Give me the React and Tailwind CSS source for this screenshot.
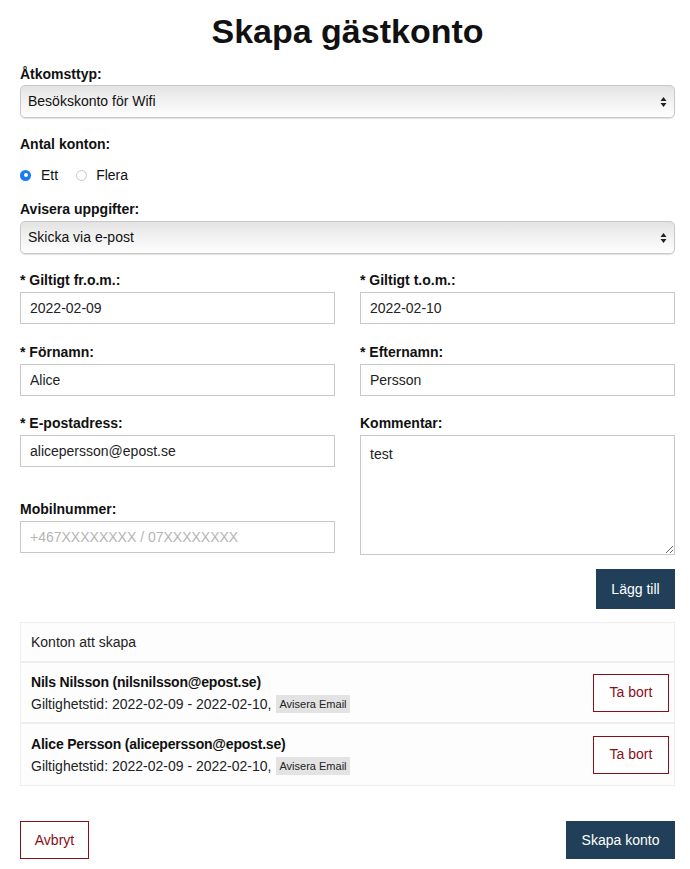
import React from "react";

const font = { fontFamily: '"Liberation Sans", Arial, Helvetica, sans-serif' };

function Arrows() {
  return (
    <svg width="7" height="12" viewBox="0 0 7 12" className="shrink-0">
      <path d="M3.5 1 L6.5 5 L0.5 5 Z" fill="#222" />
      <path d="M3.5 11 L6.5 7 L0.5 7 Z" fill="#222" />
    </svg>
  );
}

function FakeSelect({ value, className = "" }) {
  return (
    <div
      className={
        "h-[33px] rounded-[5px] border border-[#c9c9c9] bg-gradient-to-b from-[#e3e3e3] via-[#f2f2f2] to-[#fefefe] shadow-[0_1px_1px_rgba(0,0,0,0.12)] flex items-center justify-between pl-[7px] pr-[7px] text-[14px] text-[#111] " +
        className
      }
    >
      <span>{value}</span>
      <Arrows />
    </div>
  );
}

function Label({ children, className = "" }) {
  return (
    <div className={"h-[20px] leading-[20px] text-[14px] font-bold text-[#111] " + className}>
      {children}
    </div>
  );
}

function Input({ value, placeholder, className = "" }) {
  return (
    <input
      readOnly
      value={value}
      placeholder={placeholder}
      className={
        "block w-full h-[32px] border border-[#c8c8c8] bg-white px-[9px] text-[14px] text-[#222] placeholder:text-[#b5b5b5] outline-none " +
        className
      }
      style={font}
    />
  );
}

function Row({ name, last }) {
  return (
    <div
      className={
        "h-[61px] flex items-center justify-between pl-[10px] pr-[5px] bg-[#fdfdfd] " +
        (last ? "" : "border-b-2 border-[#eeeeee]")
      }
    >
      <div>
        <div className="text-[14px] font-bold text-[#111] leading-[20px] tracking-[-0.2px]">{name}</div>
        <div className="text-[14px] text-[#222] leading-[20px] mt-[2px] flex items-center">
          <span>Giltighetstid: 2022-02-09 - 2022-02-10,</span>
          <span className="ml-[5px] bg-[#e3e3e3] text-[11px] px-[3px] leading-[18px] text-[#222]">
            Avisera Email
          </span>
        </div>
      </div>
      <button className="w-[76px] h-[38px] border border-[#8b0d18] text-[#8b0d18] text-[14px] bg-white">
        Ta bort
      </button>
    </div>
  );
}

export default function App() {
  return (
    <div className="w-[690px] h-[869px] bg-white pl-[20px] pr-[15px] overflow-hidden" style={font}>
      <h1 className="pt-[11px] h-[52px] leading-[40px] text-center text-[34px] font-bold text-[#111]">
        Skapa gästkonto
      </h1>

      <Label className="mt-[12px]">Åtkomsttyp:</Label>
      <FakeSelect value="Besökskonto för Wifi" className="mt-[1px]" />

      <Label className="mt-[16px]">Antal konton:</Label>
      <div className="mt-[11px] h-[20px] flex items-center text-[14px] text-[#111]">
        <span className="w-[11px] h-[11px] rounded-full bg-[#1a7cf5] flex items-center justify-center">
          <span className="w-[4px] h-[4px] rounded-full bg-white" />
        </span>
        <span className="ml-[10px]">Ett</span>
        <span className="ml-[18px] w-[11px] h-[11px] rounded-full border border-[#c9c9c9] bg-white" />
        <span className="ml-[9px]">Flera</span>
      </div>

      <Label className="mt-[14px]">Avisera uppgifter:</Label>
      <FakeSelect value="Skicka via e-post" className="mt-[2px]" />

      <div className="grid grid-cols-2 gap-x-[25px] mt-[16px]">
        <div>
          <Label>* Giltigt fr.o.m.:</Label>
          <Input value="2022-02-09" className="mt-[2px]" />
        </div>
        <div>
          <Label>* Giltigt t.o.m.:</Label>
          <Input value="2022-02-10" className="mt-[2px]" />
        </div>
      </div>

      <div className="grid grid-cols-2 gap-x-[25px] mt-[18px]">
        <div>
          <Label>* Förnamn:</Label>
          <Input value="Alice" className="mt-[2px]" />
        </div>
        <div>
          <Label>* Efternamn:</Label>
          <Input value="Persson" className="mt-[2px]" />
        </div>
      </div>

      <div className="grid grid-cols-2 gap-x-[25px] mt-[17px]">
        <div>
          <Label>* E-postadress:</Label>
          <Input value="alicepersson@epost.se" className="mt-[2px]" />
          <Label className="mt-[32px]">Mobilnummer:</Label>
          <Input value="" placeholder="+467XXXXXXXX / 07XXXXXXXX" className="mt-[2px]" />
        </div>
        <div>
          <Label>Kommentar:</Label>
          <textarea
            readOnly
            value="test"
            className="block w-full h-[120px] mt-[2px] border border-[#c8c8c8] bg-white px-[9px] py-[8px] text-[14px] text-[#222] outline-none resize"
            style={font}
          />
        </div>
      </div>

      <div className="flex justify-end mt-[14px]">
        <button className="w-[79px] h-[40px] bg-[#213f59] text-white text-[14px]">Lägg till</button>
      </div>

      <div className="mt-[13px] border border-[#eeeeee]">
        <div className="h-[40px] flex items-center pl-[10px] text-[14px] text-[#222] bg-[#fdfdfd] border-b-2 border-[#eeeeee]">
          Konton att skapa
        </div>
        <Row name="Nils Nilsson (nilsnilsson@epost.se)" />
        <Row name="Alice Persson (alicepersson@epost.se)" last />
      </div>

      <div className="flex justify-between mt-[35px]">
        <button className="w-[69px] h-[38px] border border-[#8b0d18] text-[#8b0d18] text-[14px] bg-white">
          Avbryt
        </button>
        <button className="w-[109px] h-[38px] bg-[#213f59] text-white text-[14px]">Skapa konto</button>
      </div>
    </div>
  );
}
